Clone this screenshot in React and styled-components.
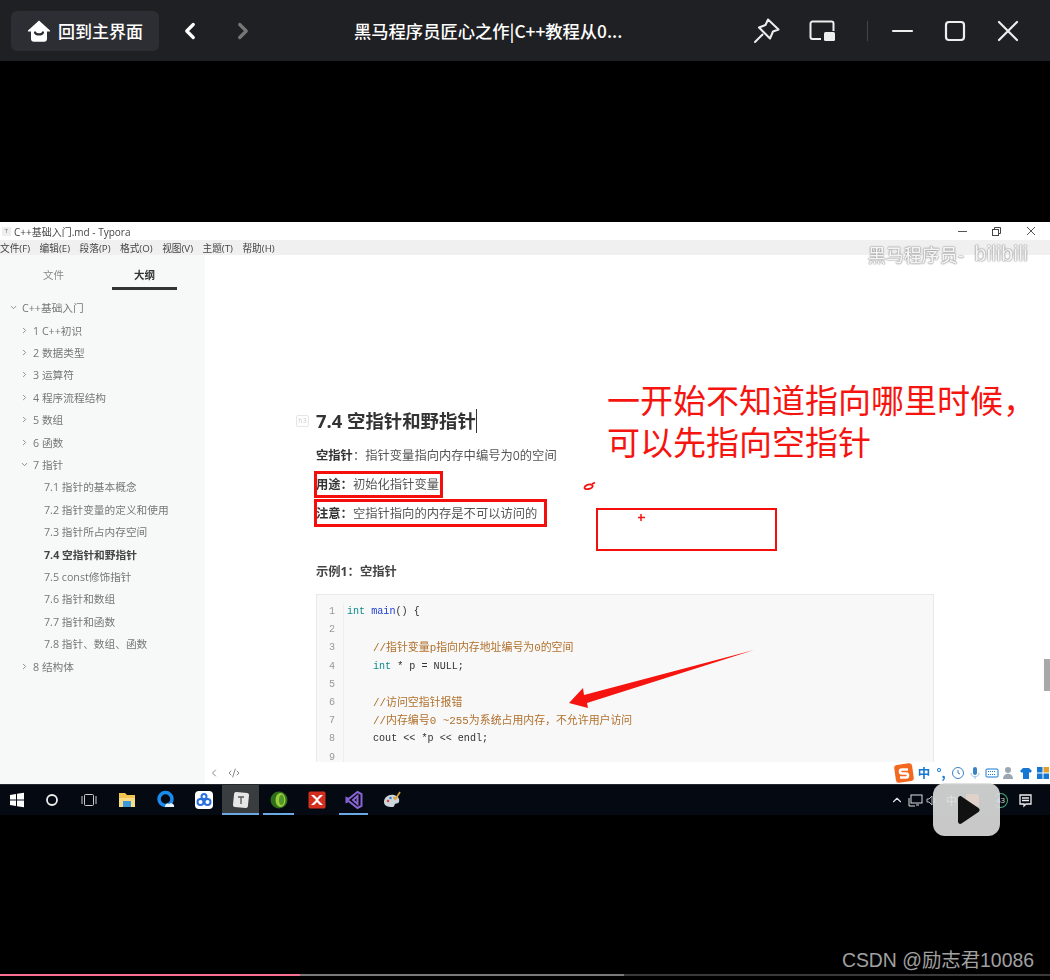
import React from 'react'
import styled, { createGlobalStyle } from 'styled-components'
import { ChevronLeft, ChevronRight, ChevronDown, ChevronUp, Code2 } from 'lucide-react'

const CJK = `"Noto Sans CJK SC", "Noto Sans", sans-serif`
const UI = `"Open Sans", "Noto Sans CJK SC", sans-serif`
const MONO = `"Liberation Mono", "Noto Sans CJK SC", monospace`

const Global = createGlobalStyle`
  html, body { margin: 0; padding: 0; background: #000; }
  body { width: 1050px; height: 980px; overflow: hidden; font-family: ${CJK}; }
  * { box-sizing: border-box; }
`

const Page = styled.div`
  position: relative;
  width: 1050px;
  height: 980px;
  display: flex;
  flex-direction: column;
  background: #000;
`

/* player top bar */
const TopBar = styled.div`
  height: 61px;
  background: #1f2023;
  display: flex;
  align-items: center;
  padding-left: 11px;
  flex-shrink: 0;
`
const HomeButton = styled.div`
  width: 148px;
  height: 40px;
  background: #2d2e33;
  border-radius: 6px;
  display: flex;
  align-items: center;
  gap: 7px;
  padding-left: 16px;
  color: #fff;
  font-size: 17px;
  font-weight: 500;
`
const NavArrows = styled.div`
  display: flex;
  gap: 27px;
  margin-left: 18px;
  width: 80px;
`
const VideoTitle = styled.div`
  margin-left: 97px;
  width: 280px;
  color: #fff;
  font-size: 17.3px;
  font-weight: 500;
  white-space: nowrap;
`
const WindowTools = styled.div`
  display: flex;
  align-items: center;
  margin-left: 118px;
`
const ToolIcon = styled.svg`
  width: 28px;
  height: 28px;
  margin-right: ${p => p.$gap || 0}px;
  flex-shrink: 0;
`
const Divider = styled.div`
  width: 1px;
  height: 20px;
  background: #44464a;
  margin-right: 21px;
`

const BlackGap = styled.div`
  height: 161px;
  flex-shrink: 0;
`

/* the recorded Typora window */
const Screen = styled.div`
  height: 562px;
  flex-shrink: 0;
  background: #fff;
  display: flex;
  flex-direction: column;
  filter: blur(0.45px);
`
const TitleRow = styled.div`
  height: 18px;
  display: flex;
  align-items: center;
  padding-left: 2px;
  background: #fff;
  font: 10px ${UI};
  color: #444;
  flex-shrink: 0;
`
const AppMark = styled.span`
  width: 9px;
  height: 9px;
  background: #eee;
  color: #777;
  font-size: 6px;
  line-height: 9px;
  text-align: center;
  margin-right: 3px;
`
const TitleText = styled.span`
  flex: 1;
`
const WinButtons = styled.div`
  display: flex;
  gap: 25px;
  padding-right: 14px;
  align-items: center;
`
const MenuRow = styled.div`
  height: 15px;
  background: #f0f0f0;
  display: flex;
  gap: 9.5px;
  align-items: center;
  padding-left: 0;
  font: 9.7px ${UI};
  color: #444;
  flex-shrink: 0;
`
const Body = styled.div`
  flex: 1;
  display: flex;
  min-height: 0;
`
const Sidebar = styled.div`
  width: 205px;
  background: #f7f8f8;
  flex-shrink: 0;
`
const Tabs = styled.div`
  display: flex;
  height: 35px;
  margin-bottom: 6.6px;
  padding-left: 21px;
`
const Tab = styled.div`
  width: 65px;
  margin-right: ${p => p.$gap || 0}px;
  text-align: center;
  font-size: 10.5px;
  line-height: 40px;
  font-weight: ${p => (p.$active ? 700 : 400)};
  color: ${p => (p.$active ? '#333' : '#8a8a8a')};
  border-bottom: ${p => (p.$active ? '3px solid #333' : 'none')};
`
const OutlineRow = styled.div`
  height: 22.4px;
  display: flex;
  align-items: center;
  padding-left: ${p => p.$indent}px;
  font: ${p => (p.$bold ? 700 : 400)} 10.7px ${UI};
  color: ${p => (p.$bold ? '#444' : '#777')};
  white-space: nowrap;
`
const Caret = styled.span`
  width: 13px;
  display: inline-flex;
  color: #888;
`
const Editor = styled.div`
  flex: 1;
  display: flex;
  flex-direction: column;
  min-width: 0;
  position: relative;
`
const Doc = styled.div`
  flex: 1;
  padding: 154px 0 0 111px;
  overflow: hidden;
  min-height: 0;
`
const Heading = styled.div`
  position: relative;
  width: fit-content;
  height: 24px;
  font: 700 18.4px/24px ${UI};
  color: #333;
  display: flex;
`
const Cursor = styled.span`
  width: 1px;
  height: 24px;
  background: #333;
`
const HeadTag = styled.span`
  position: absolute;
  left: -20px;
  top: 6px;
  width: 13px;
  height: 12px;
  border: 1px solid #e6e6e6;
  border-radius: 2px;
  color: #ccc;
  font: 7px/10px ${UI};
  text-align: center;
`
const Para = styled.div`
  height: 29px;
  font: 12.3px/29px ${UI};
  color: #555;
  white-space: nowrap;
  b { color: #333; font-weight: 700; }
`
const Lead = styled(Para)`
  margin-top: 8px;
`
const Sub = styled.div`
  margin-top: 29px;
  height: 29px;
  font: 700 12.3px/29px ${UI};
  color: #444;
`
const CodeBlock = styled.div`
  margin-top: 8px;
  width: 618px;
  height: 169px;
  background: #f8f8f8;
  border: 1px solid #e9e9e9;
  border-bottom: none;
  padding-top: 8px;
  overflow: hidden;
`
const CodeLine = styled.div`
  height: 18.2px;
  display: flex;
  font: 10.1px/18.2px ${MONO};
  color: #333;
  white-space: pre;
`
const LineNo = styled.span`
  width: 27px;
  padding-right: 8px;
  margin-right: 3px;
  text-align: right;
  color: #999;
  border-right: 1px solid #eee;
`
const CodeText = styled.span`
  padding-left: ${p => (p.$indented ? 26 : 0)}px;
`
const Kw = styled.span`
  color: ${p => p.$c};
`
const Comment = styled.span`
  color: #b0702c;
  font-size: 10.9px;
`
const StatusBar = styled.div`
  height: 22px;
  display: flex;
  align-items: center;
  justify-content: space-between;
  padding-left: 3px;
  color: #888;
  flex-shrink: 0;
`
const StatusLeft = styled.div`
  display: flex;
  gap: 8px;
  align-items: center;
`
const ImeBar = styled.div`
  display: flex;
  align-items: center;
  gap: 3px;
  height: 20px;
  color: #1577d2;
`
const ImeLogo = styled.svg`
  width: 20px;
  height: 20px;
`
const ImeText = styled.span`
  width: 14px;
  font-size: 12.5px;
  font-weight: 700;
  line-height: 14px;
  text-align: center;
`
const ImeIcon = styled.svg`
  width: 14px;
  height: 14px;
`
const ScrollThumb = styled.div`
  position: absolute;
  right: 0;
  top: 404px;
  width: 6px;
  height: 32px;
  background: #a8a8a8;
`
const Watermark = styled.div`
  position: absolute;
  right: 22px;
  top: -14px;
  display: flex;
  align-items: center;
  gap: 10px;
  color: #f4f4f4;
  text-shadow: 0 0 1px #777, 0 0 2px #888;
  font-size: 18px;
  font-weight: 500;
`
const WatermarkLogo = styled.span`
  font: 400 22px "Liberation Sans", sans-serif;
`

/* red marks the presenter drew */
const RedBox = styled.div`
  position: absolute;
  left: ${p => p.$x}px;
  top: ${p => p.$y}px;
  width: ${p => p.$w}px;
  height: ${p => p.$h}px;
  border: ${p => p.$t || 3}px solid #f40f0c;
`
const RedNote = styled.div`
  position: absolute;
  left: 607px;
  top: 378px;
  width: 442px;
  font: 400 33px/42px ${CJK};
  color: #f5140f;
  white-space: nowrap;
`
const Marks = styled.svg`
  position: absolute;
  left: 0;
  top: 0;
  width: 1050px;
  height: 980px;
  pointer-events: none;
`

/* windows taskbar */
const Taskbar = styled.div`
  height: 31px;
  background: #050a12;
  display: flex;
  align-items: center;
  flex-shrink: 0;
  border-top: 1px solid #24282c;
`
const TaskItem = styled.div`
  position: relative;
  width: ${p => p.$w || 37.6}px;
  height: 100%;
  display: flex;
  align-items: center;
  justify-content: center;
  background: ${p => (p.$active ? '#3a3d40' : 'transparent')};
  flex-shrink: 0;
  &::after {
    content: '';
    display: ${p => (p.$open ? 'block' : 'none')};
    position: absolute;
    left: ${p => (p.$active ? 0 : 4)}px;
    right: ${p => (p.$active ? 0 : 4)}px;
    bottom: 0;
    height: 2px;
    background: #6aa9e6;
  }
`
const TaskIcon = styled.svg`
  width: 20px;
  height: 20px;
`
const Tray = styled.div`
  margin-left: auto;
  display: flex;
  align-items: center;
  padding-right: 17px;
  color: #dfe3e6;
  font: 11px ${UI};
`
const TrayIcon = styled.svg`
  width: 15px;
  height: 15px;
  margin-left: ${p => p.$ml || 0}px;
`
const TrayLabel = styled.span`
  margin-left: ${p => p.$ml || 0}px;
`
const TrayBadge = styled.span`
  width: 15px;
  height: 15px;
  margin-left: 13px;
  border: 1.5px solid #48a878;
  border-left-color: transparent;
  border-radius: 50%;
  font-size: 8px;
  line-height: 12px;
  text-align: center;
`

const PlayBadge = styled.div`
  position: absolute;
  left: 933px;
  top: 783px;
  width: 67px;
  height: 53px;
  border-radius: 12px;
  background: rgba(222, 222, 222, 0.9);
  display: flex;
  align-items: center;
  justify-content: center;
`

const Footer = styled.div`
  flex: 1;
  display: flex;
  flex-direction: column;
  justify-content: flex-end;
`
const Credit = styled.div`
  align-self: flex-end;
  padding-right: 16px;
  margin-bottom: 1px;
  color: #a0a0a0;
  font: 400 19.4px/26px "Liberation Sans", "Noto Sans CJK SC", sans-serif;
`
const Progress = styled.div`
  height: 2px;
  margin: 0 0 4px;
  background: #3a3a3a;
  display: flex;
`
const ProgressPart = styled.div`
  width: ${p => p.$w}px;
  background: ${p => p.$c};
`

const outline = [
  { t: 'C++基础入门', indent: 9, open: true },
  { t: '1 C++初识', indent: 20 },
  { t: '2 数据类型', indent: 20 },
  { t: '3 运算符', indent: 20 },
  { t: '4 程序流程结构', indent: 20 },
  { t: '5 数组', indent: 20 },
  { t: '6 函数', indent: 20 },
  { t: '7 指针', indent: 20, open: true },
  { t: '7.1 指针的基本概念', indent: 44, leaf: true },
  { t: '7.2 指针变量的定义和使用', indent: 44, leaf: true },
  { t: '7.3 指针所占内存空间', indent: 44, leaf: true },
  { t: '7.4 空指针和野指针', indent: 44, leaf: true, bold: true },
  { t: '7.5 const修饰指针', indent: 44, leaf: true },
  { t: '7.6 指针和数组', indent: 44, leaf: true },
  { t: '7.7 指针和函数', indent: 44, leaf: true },
  { t: '7.8 指针、数组、函数', indent: 44, leaf: true },
  { t: '8 结构体', indent: 20 },
]

const menus = ['文件(F)', '编辑(E)', '段落(P)', '格式(O)', '视图(V)', '主题(T)', '帮助(H)']

const TEAL = '#0e8a8a'
const BLUE = '#2040d0'

const code = [
  { body: <><Kw $c={TEAL}>int</Kw> <Kw $c={BLUE}>main</Kw>() {'{'}</> },
  { body: '' },
  { indented: true, body: <Comment>//指针变量p指向内存地址编号为0的空间</Comment> },
  { indented: true, body: <><Kw $c={TEAL}>int</Kw> * p = NULL;</> },
  { body: '' },
  { indented: true, body: <Comment>//访问空指针报错</Comment> },
  { indented: true, body: <Comment>//内存编号0 ~255为系统占用内存，不允许用户访问</Comment> },
  { indented: true, body: 'cout << *p << endl;' },
  { body: '' },
]

const HomeIcon = () => (
  <svg width="24" height="24" viewBox="0 0 24 24">
    <path d="M12 1.5 23 11.5c.4.5 0 1-.5 1H20v7.5c0 1.6-1.2 2.8-2.8 2.8H6.8C5.2 22.8 4 21.6 4 20v-7.5H1.5c-.5 0-.9-.5-.5-1z" fill="#fff" />
    <path d="M8 13.5c1.2 2.6 6.8 2.6 8 0" fill="none" stroke="#2d2e33" strokeWidth="2.2" strokeLinecap="round" />
  </svg>
)

export default function App() {
  return (
    <Page>
      <Global />
      <TopBar>
        <HomeButton><HomeIcon />回到主界面</HomeButton>
        <NavArrows>
          <ChevronLeft size={26} color="#fff" strokeWidth={3} />
          <ChevronRight size={26} color="#777" strokeWidth={3} />
        </NavArrows>
        <VideoTitle>黑马程序员匠心之作|C++教程从0...</VideoTitle>
        <WindowTools>
          <ToolIcon viewBox="0 0 28 28" $gap={28} fill="none" stroke="#eee" strokeWidth="2" strokeLinejoin="round" strokeLinecap="round">
            <path d="M16 2.5 26.5 12.5 21 14.5 18 21.500 7 10.5 13.5 8z" />
            <path d="M10.5 17.5 3 25" />
          </ToolIcon>
          <ToolIcon viewBox="0 0 28 28" $gap={31}>
            <path d="M13 22H4.5A2 2 0 0 1 2.500 20V6.5a2 2 0 0 1 2-2h19a2 2 0 0 1 2 2V14" fill="none" stroke="#eee" strokeWidth="2" />
            <rect x="16" y="15" width="11" height="9" rx="1.5" fill="#eee" />
          </ToolIcon>
          <Divider />
          <ToolIcon viewBox="0 0 28 28" $gap={24} stroke="#eee" strokeWidth="2.2" strokeLinecap="round">
            <path d="M4 14h19" />
          </ToolIcon>
          <ToolIcon viewBox="0 0 28 28" $gap={25} fill="none" stroke="#eee" strokeWidth="2.2">
            <rect x="5" y="5" width="18" height="18" rx="3" />
          </ToolIcon>
          <ToolIcon viewBox="0 0 28 28" fill="none" stroke="#eee" strokeWidth="2.2" strokeLinecap="round">
            <path d="M5 5l18 18M23 5 5 23" />
          </ToolIcon>
        </WindowTools>
      </TopBar>

      <BlackGap />

      <Screen>
        <TitleRow>
          <AppMark>T</AppMark>
          <TitleText>C++基础入门.md - Typora</TitleText>
          <WinButtons>
            <svg width="9" height="9" viewBox="0 0 9 9"><path d="M0 4.5h9" stroke="#555" /></svg>
            <svg width="9" height="9" viewBox="0 0 9 9" fill="none" stroke="#444"><rect x=".5" y="2.5" width="6" height="6" /><path d="M2.5 2.5v-2h6v6h-2" /></svg>
            <svg width="10" height="10" viewBox="0 0 10 10"><path d="M1 1l8 8M9 1 1 9" stroke="#555" /></svg>
          </WinButtons>
        </TitleRow>
        <MenuRow>
          {menus.map(m => <span key={m}>{m}</span>)}
        </MenuRow>
        <Body>
          <Sidebar>
            <Tabs>
              <Tab $gap={26}>文件</Tab>
              <Tab $active>大纲</Tab>
            </Tabs>
            {outline.map(o => (
              <OutlineRow key={o.t} $indent={o.indent} $bold={o.bold}>
                {!o.leaf && (
                  <Caret>
                    {o.open ? <ChevronDown size={9} strokeWidth={2.5} /> : <ChevronRight size={9} strokeWidth={2.5} />}
                  </Caret>
                )}
                {o.t}
              </OutlineRow>
            ))}
          </Sidebar>
          <Editor>
            <Watermark>黑马程序员-<WatermarkLogo>bilibili</WatermarkLogo></Watermark>
            <Doc>
              <Heading>
                <HeadTag>h3</HeadTag>
                7.4 空指针和野指针<Cursor />
              </Heading>
              <Lead><b>空指针</b>：指针变量指向内存中编号为0的空间</Lead>
              <Para><b>用途：</b>初始化指针变量</Para>
              <Para><b>注意：</b>空指针指向的内存是不可以访问的</Para>
              <Sub>示例1：空指针</Sub>
              <CodeBlock>
                {code.map((c, i) => (
                  <CodeLine key={i}>
                    <LineNo>{i + 1}</LineNo>
                    <CodeText $indented={c.indented}>{c.body}</CodeText>
                  </CodeLine>
                ))}
              </CodeBlock>
            </Doc>
            <StatusBar>
              <StatusLeft>
                <ChevronLeft size={12} />
                <Code2 size={12} />
              </StatusLeft>
              <ImeBar>
                <ImeLogo viewBox="0 0 20 20">
                  <rect x="1" y="1" width="18" height="18" rx="3" fill="#f2681f" transform="rotate(-8 10 10)" />
                  <path d="M14 6.5H8a2 2 0 0 0 0 4h4a2 2 0 0 1 0 4H6" fill="none" stroke="#fff" strokeWidth="2.6" />
                </ImeLogo>
                <ImeText>中</ImeText>
                <ImeText>°,</ImeText>
                <ImeIcon viewBox="0 0 14 14" fill="none" stroke="#3b82c4"><circle cx="7" cy="7" r="5.5" /><path d="M7 4v3l2 1" /></ImeIcon>
                <ImeIcon viewBox="0 0 14 14" fill="#3b82c4"><rect x="5" y="1" width="4" height="8" rx="2" /><path d="M3 7c0 5 8 5 8 0M7 11v2" fill="none" stroke="#9bbfe0" /></ImeIcon>
                <ImeIcon viewBox="0 0 14 14" fill="none" stroke="#1577d2"><rect x="1" y="3" width="12" height="8" rx="1" /><path d="M3 5.5h8M3 8.5h8" strokeDasharray="1 1" /></ImeIcon>
                <ImeIcon viewBox="0 0 14 14" fill="#9aa7b2"><circle cx="6" cy="4" r="3" /><path d="M1 13c0-7 10-7 10 0z" /></ImeIcon>
                <ImeIcon viewBox="0 0 14 14" fill="#1577d2"><path d="M4 2h6l3 3-2 2-1-1v7H4V6L3 7 1 5z" /></ImeIcon>
                <ImeIcon viewBox="0 0 14 14" fill="#1577d2"><rect x="1" y="1" width="5.5" height="5.5" /><rect x="7.5" y="1" width="5.5" height="5.5" fill="#e0a030" /><rect x="1" y="7.5" width="5.5" height="5.5" /><rect x="7.5" y="7.5" width="5.5" height="5.5" /></ImeIcon>
              </ImeBar>
            </StatusBar>
            <ScrollThumb />
          </Editor>
        </Body>
      </Screen>

      <Taskbar>
        <TaskItem $w={33}>
          <TaskIcon viewBox="0 0 20 20" fill="#fff"><path d="M3 5l6-1v5.5H3zM10 3.8l7-1v6.7h-7zM3 10.5h6V16l-6-1zM10 10.500h7v6.700l-7-1z" /></TaskIcon>
        </TaskItem>
        <TaskItem $w={37}>
          <TaskIcon viewBox="0 0 20 20" fill="none" stroke="#eee" strokeWidth="1.8"><circle cx="10" cy="10" r="5" /></TaskIcon>
        </TaskItem>
        <TaskItem $w={37}>
          <TaskIcon viewBox="0 0 20 20" fill="none" stroke="#ccc"><rect x="5.5" y="4.5" width="9" height="11" rx="1" /><path d="M3 6v8M17 6v8" /></TaskIcon>
        </TaskItem>
        <TaskItem $w={40}>
          <TaskIcon viewBox="0 0 20 20"><path d="M2 3h6l2 2h8v12H2z" fill="#f3c550" /><rect x="2" y="8" width="16" height="9" fill="#f8dc85" /><rect x="6" y="11" width="8" height="6" fill="#3a9ad9" /></TaskIcon>
        </TaskItem>
        <TaskItem $w={38}>
          <TaskIcon viewBox="0 0 20 20"><circle cx="9.5" cy="9" r="6.5" fill="none" stroke="#1a8cf0" strokeWidth="3.5" /><path d="M9 17c0-4 3-4 4-3 2-2 6 0 5 3z" fill="#e8f2fb" /></TaskIcon>
        </TaskItem>
        <TaskItem $w={37}>
          <TaskIcon viewBox="0 0 20 20"><rect x="1" y="1" width="18" height="18" rx="4" fill="#fff" /><circle cx="6.5" cy="12" r="3" fill="none" stroke="#2a6fe0" strokeWidth="2" /><circle cx="13.5" cy="12" r="3" fill="none" stroke="#2a6fe0" strokeWidth="2" /><circle cx="10" cy="6.5" r="2.5" fill="none" stroke="#2a6fe0" strokeWidth="2" /></TaskIcon>
        </TaskItem>
        <TaskItem $w={37} $active $open>
          <TaskIcon viewBox="0 0 20 20"><rect x="2.5" y="2.5" width="15" height="15" rx="2" fill="#e6e6e6" transform="rotate(6 10 10)" /><path d="M7 7h6M10 7v7" stroke="#555" strokeWidth="1.3" /></TaskIcon>
        </TaskItem>
        <TaskItem $w={39} $open>
          <TaskIcon viewBox="0 0 20 20"><circle cx="10" cy="10" r="8.5" fill="#2f6f1c" /><ellipse cx="11.5" cy="10" rx="5" ry="7" fill="#9ccb3c" /><ellipse cx="12.5" cy="10" rx="2.5" ry="5" fill="#4e9a28" /></TaskIcon>
        </TaskItem>
        <TaskItem $w={37}>
          <TaskIcon viewBox="0 0 20 20"><rect x="1.5" y="1.5" width="17" height="17" rx="1.5" fill="#d32f20" /><path d="M4 5l5 5-5 5h3l3-3 3 3h3l-5-5 5-5h-3l-3 3-3-3z" fill="#fff" /></TaskIcon>
        </TaskItem>
        <TaskItem $w={37} $open>
          <TaskIcon viewBox="0 0 20 20" fill="none" stroke="#8a63d2" strokeWidth="2"><path d="M13.5 2l4 2v12l-4 2-9-7-2 1V8l2 1z" /><path d="M13.5 6v8L9 10z" /></TaskIcon>
        </TaskItem>
        <TaskItem $w={40}>
          <TaskIcon viewBox="0 0 20 20"><path d="M2 12c0-5 5-8 10-7 4 1 6 4 5 7-1 2-3 1-4 2s0 3-3 3c-4 0-8-1-8-5z" fill="#cdd6dc" /><circle cx="6" cy="11" r="1.3" fill="#d9483b" /><circle cx="8.5" cy="8" r="1.3" fill="#3b82c4" /><circle cx="12.5" cy="8" r="1.3" fill="#e0a030" /><path d="M13 10 18 2" stroke="#d9a441" strokeWidth="1.6" /></TaskIcon>
        </TaskItem>
        <Tray>
          <ChevronUp size={14} />
          <TrayIcon $ml={4} viewBox="0 0 15 15" fill="none" stroke="#ddd"><rect x="3" y="2" width="11" height="8" /><path d="M1 5v8h6M8 12h3" /></TrayIcon>
          <TrayIcon $ml={2} viewBox="0 0 15 15" fill="none" stroke="#bbb"><path d="M2 6v3h2l3 3V3L4 6z" /><path d="M9 5c1 1 1 4 0 5" /></TrayIcon>
          <TrayLabel $ml={6}>中</TrayLabel>
          <TrayIcon $ml={8} viewBox="0 0 15 15"><rect x="1" y="1" width="13" height="13" rx="2" fill="#f2681f" /></TrayIcon>
          <TrayBadge>43</TrayBadge>
          <TrayIcon $ml={10} viewBox="0 0 15 15" fill="none" stroke="#eee" strokeWidth="1.3"><path d="M2 2h11v9H8l-2 2v-2H2z" /><path d="M4 5h7M4 7.5h7" /></TrayIcon>
        </Tray>
      </Taskbar>

      <Footer>
        <Credit>CSDN @励志君10086</Credit>
        <Progress>
          <ProgressPart $w={300} $c="#fb6f92" />
          <ProgressPart $w={324} $c="#7a7a7a" />
        </Progress>
      </Footer>

      <RedBox $x={314} $y={471} $w={129} $h={27} />
      <RedBox $x={314} $y={499} $w={233} $h={28} />
      <RedBox $x={596} $y={508} $w={181} $h={43} $t={2} />
      <RedNote>一开始不知道指向哪里时候，<br />可以先指向空指针</RedNote>
      <Marks viewBox="0 0 1050 980">
        <path d="M754 650 587 703 588 708 569 703 583 688 584 695z" fill="#f5140f" />
        <path d="M641 514v7M638 517.5h7" stroke="#f5140f" strokeWidth="1.5" />
        <path d="M591 484.500c-3-.5-6 1-6.500 3-.3 1.800 3 2 5.500 1.200 2.500-.8 4-3 1-4.200zM592 484l3-1.500" fill="none" stroke="#f5140f" strokeWidth="1.8" />
      </Marks>

      <PlayBadge>
        <svg width="30" height="30" viewBox="0 0 30 30"><path d="M6 3.5c0-2 2-3 3.5-2l17 11.5c1.500 1 1.500 3 0 4L9.500 28.500c-1.500 1-3.500 0-3.500-2z" fill="#111" /></svg>
      </PlayBadge>
    </Page>
  )
}
